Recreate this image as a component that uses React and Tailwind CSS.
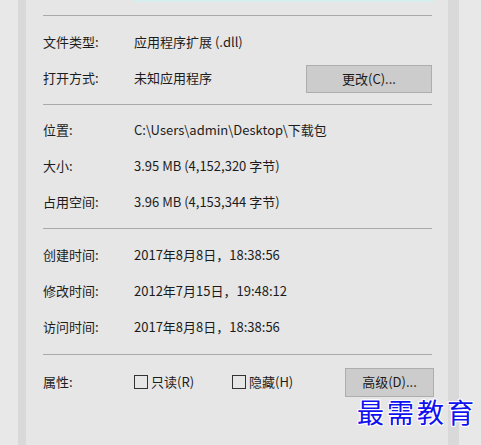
import React from "react";

const font = { fontFamily: '"Noto Sans CJK SC", "Noto Sans", sans-serif' };

const Row = ({ label, children }) => (
  <div className="flex items-center h-[36px]">
    <div className="w-[91px] shrink-0">{label}</div>
    <div className="flex-1 flex items-center">{children}</div>
  </div>
);

const Line = () => <div className="h-px bg-[#a9a9a9] mr-[16px]" />;

const Button = ({ className, children }) => (
  <button className={`h-[28px] bg-[#cccccc] border border-[#adadad] text-[13px] text-[#1a1a1a] ${className}`}>
    {children}
  </button>
);

const Check = ({ label }) => (
  <label className="flex items-center gap-[3px]">
    <span className="w-[14px] h-[14px] border border-[#333] bg-[#e6e6e6]" />
    <span>{label}</span>
  </label>
);

export default function App() {
  return (
    <div
      className="relative w-[481px] h-[445px] flex bg-[#e8e8e8] text-[13px] text-[#1c1c1c] overflow-hidden"
      style={font}
    >
      <div className="w-[18px] shrink-0" />
      <div className="w-[8px] shrink-0 bg-[#d9d9d9]" />
      <div className="w-[422px] shrink-0 bg-[#e6e6e6] pl-[17px]">
        <div className="ml-[90px] w-[300px] h-[2px] bg-[#d6eeee]" />
        <div className="mt-[13px]">
          <Line />
        </div>
        <div className="pt-[8px] pb-[8px] mr-[16px]">
          <Row label="文件类型:">应用程序扩展 (.dll)</Row>
          <Row label="打开方式:">
            <span className="flex-1">未知应用程序</span>
            <Button className="w-[126px] mt-[2px]">更改(C)...</Button>
          </Row>
        </div>
        <Line />
        <div className="pt-[7px] pb-[8px]">
          <Row label="位置:">C:\Users\admin\Desktop\下载包</Row>
          <Row label="大小:">3.95 MB (4,152,320 字节)</Row>
          <Row label="占用空间:">3.96 MB (4,153,344 字节)</Row>
        </div>
        <Line />
        <div className="pt-[8px] pb-[9px]">
          <Row label="创建时间:">2017年8月8日，18:38:56</Row>
          <Row label="修改时间:">2012年7月15日，19:48:12</Row>
          <Row label="访问时间:">2017年8月8日，18:38:56</Row>
        </div>
        <Line />
        <div className="pt-[9px] mr-[16px]">
          <Row label="属性:">
            <div className="w-[98px]">
              <Check label="只读(R)" />
            </div>
            <div className="flex-1">
              <Check label="隐藏(H)" />
            </div>
            <Button className="w-[89px] h-[29px] mr-[-2px]">高级(D)...</Button>
          </Row>
        </div>
      </div>
      <div className="w-[11px] shrink-0 bg-[#d9d9d9]" />
      <div className="flex-1" />
      <div
        className="absolute left-[357px] top-[398px] text-[27px] leading-none tracking-[3px] text-[#1010f0] [text-shadow:0_0_2px_#fff,1px_1px_0_#fff,-1px_-1px_0_#fff,1px_-1px_0_#fff,-1px_1px_0_#fff]"
        style={{ fontFamily: '"Noto Sans CJK SC", sans-serif' }}
      >
        最需教育
      </div>
    </div>
  );
}
